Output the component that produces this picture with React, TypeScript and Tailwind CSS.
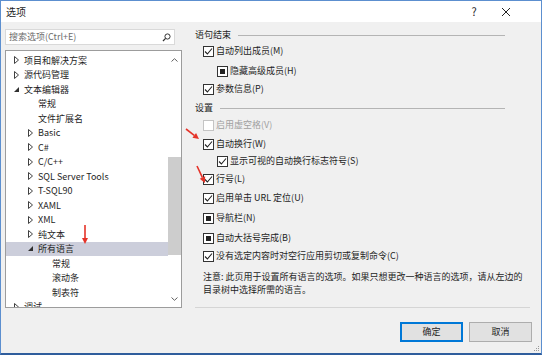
import React from "react"

type Node = { d: number; t: string; s?: "closed" | "open"; sel?: boolean }

const tree: Node[] = [
  { d: 0, t: "项目和解决方案", s: "closed" },
  { d: 0, t: "源代码管理", s: "closed" },
  { d: 0, t: "文本编辑器", s: "open" },
  { d: 1, t: "常规" },
  { d: 1, t: "文件扩展名" },
  { d: 1, t: "Basic", s: "closed" },
  { d: 1, t: "C#", s: "closed" },
  { d: 1, t: "C/C++", s: "closed" },
  { d: 1, t: "SQL Server Tools", s: "closed" },
  { d: 1, t: "T-SQL90", s: "closed" },
  { d: 1, t: "XAML", s: "closed" },
  { d: 1, t: "XML", s: "closed" },
  { d: 1, t: "纯文本", s: "closed" },
  { d: 1, t: "所有语言", s: "open", sel: true },
  { d: 2, t: "常规" },
  { d: 2, t: "滚动条" },
  { d: 2, t: "制表符" },
  { d: 0, t: "调试", s: "closed" },
]

const indent = ["pl-[8px]", "pl-[22px]", "pl-[36px]"]

type Row =
  | { kind: "head"; text: string; mt: string }
  | { kind: "check"; text: string; state: "on" | "mixed" | "off"; sub?: boolean; mt: string }

const rows: Row[] = [
  { kind: "head", text: "语句结束", mt: "mt-[6px]" },
  { kind: "check", text: "自动列出成员(M)", state: "on", mt: "mt-[2px]" },
  { kind: "check", text: "隐藏高级成员(H)", state: "mixed", sub: true, mt: "mt-[6px]" },
  { kind: "check", text: "参数信息(P)", state: "on", mt: "mt-[4px]" },
  { kind: "head", text: "设置", mt: "mt-[5px]" },
  { kind: "check", text: "启用虚空格(V)", state: "off", mt: "mt-[3px]" },
  { kind: "check", text: "自动换行(W)", state: "on", mt: "mt-[5px]" },
  { kind: "check", text: "显示可视的自动换行标志符号(S)", state: "on", sub: true, mt: "mt-[3px]" },
  { kind: "check", text: "行号(L)", state: "on", mt: "mt-[4px]" },
  { kind: "check", text: "启用单击 URL 定位(U)", state: "on", mt: "mt-[5px]" },
  { kind: "check", text: "导航栏(N)", state: "mixed", mt: "mt-[6px]" },
  { kind: "check", text: "自动大括号完成(B)", state: "mixed", mt: "mt-[6px]" },
  { kind: "check", text: "没有选定内容时对空行应用剪切或复制命令(C)", state: "on", mt: "mt-[4px]" },
]

function Toggle({ s }: { s?: "closed" | "open" }) {
  if (s === "closed")
    return (
      <svg width="5" height="8" viewBox="0 0 5 8">
        <polygon points="0.5,0.5 4.5,4 0.5,7.5" fill="#fff" stroke="#404040" strokeWidth="1" />
      </svg>
    )
  if (s === "open")
    return (
      <svg width="5" height="5" viewBox="0 0 5 5">
        <polygon points="5,0 5,5 0,5" fill="#303030" />
      </svg>
    )
  return null
}

function Box({ state }: { state: "on" | "mixed" | "off" }) {
  const off = state === "off"
  return (
    <span
      className={`w-[11px] h-[11px] shrink-0 border bg-white flex items-center justify-center ${
        off ? "border-[#c4c4c4]" : "border-[#333]"
      }`}
    >
      {state === "on" && (
        <svg width="9" height="9" viewBox="0 0 9 9">
          <polyline points="1,4.5 3.4,7 8,1.5" fill="none" stroke="#222" strokeWidth="1.1" />
        </svg>
      )}
      {state === "mixed" && <span className="w-[5px] h-[5px] bg-[#222]" />}
    </span>
  )
}

function Arrow({ x1, y1, x2, y2 }: { x1: number; y1: number; x2: number; y2: number }) {
  const dx = x2 - x1
  const dy = y2 - y1
  const len = Math.hypot(dx, dy)
  const ux = dx / len
  const uy = dy / len
  const bx = x2 - ux * 6
  const by = y2 - uy * 6
  const px = -uy * 3
  const py = ux * 3
  return (
    <g>
      <line x1={x1} y1={y1} x2={bx} y2={by} stroke="#e53329" strokeWidth="1.6" />
      <polygon points={`${x2},${y2} ${bx + px},${by + py} ${bx - px},${by - py}`} fill="#e53329" />
    </g>
  )
}

export default function App() {
  return (
    <div className="relative w-[542px] h-[355px] flex flex-col bg-[#f0f0f0] border border-[#5c8fcf] border-b-2 border-b-[#2f5d9c] font-['Noto_Sans_CJK_SC',sans-serif] text-[9px] text-[#1e1e1e] overflow-hidden">
      {/* title bar */}
      <div className="h-[21px] shrink-0 bg-white flex items-center pl-[5px]">
        <span className="text-[10px]">选项</span>
        <div className="flex-1" />
        <span className="w-[32px] text-center text-[11px]">?</span>
        <span className="w-[32px] flex justify-center mr-[19px]">
          <svg width="10" height="10" viewBox="0 0 10 10">
            <path d="M1 1L9 9M9 1L1 9" stroke="#222" strokeWidth="1" />
          </svg>
        </span>
      </div>

      <div className="flex flex-1">
        {/* left side: search + tree */}
        <div className="w-[181px] shrink-0 pl-[4px] flex flex-col">
          <div className="mt-[7px] w-[170px] h-[16px] bg-white border border-[#d9d9d9] flex items-center pl-[3px] pr-[3px]">
            <span className="flex-1 text-[#6d6d6d]">搜索选项(Ctrl+E)</span>
            <svg width="9" height="9" viewBox="0 0 9 9">
              <circle cx="5.5" cy="3.5" r="2.6" fill="none" stroke="#333" strokeWidth="1" />
              <path d="M3.6 5.4L1 8" stroke="#333" strokeWidth="1.3" />
            </svg>
          </div>

          <div className="mt-[5px] w-[177px] h-[258px] bg-white border border-[#9c9c9c] flex overflow-hidden">
            <div className="flex-1 pt-[2px] flex flex-col">
              {tree.map((n, i) => (
                <div
                  key={i}
                  className={`h-[14.5px] shrink-0 flex items-center ${indent[n.d]} ${n.sel ? "bg-[#cccedb]" : ""}`}
                >
                  <span className="w-[10px] shrink-0 flex items-center">
                    <Toggle s={n.s} />
                  </span>
                  <span className="whitespace-nowrap">{n.t}</span>
                </div>
              ))}
            </div>
            <div className="w-[13px] shrink-0 flex flex-col">
              <div className="h-[17px] flex items-center justify-center">
                <svg width="7" height="4" viewBox="0 0 7 4">
                  <polyline points="0.5,3.5 3.5,0.7 6.5,3.5" fill="none" stroke="#606060" strokeWidth="1" />
                </svg>
              </div>
              <div className="flex-1 flex flex-col">
                <div className="mt-[89px] h-[98px] bg-[#cdcdcd]" />
              </div>
              <div className="h-[17px] flex items-center justify-center">
                <svg width="7" height="4" viewBox="0 0 7 4">
                  <polyline points="0.5,0.5 3.5,3.3 6.5,0.5" fill="none" stroke="#606060" strokeWidth="1" />
                </svg>
              </div>
            </div>
          </div>
        </div>

        {/* right side: options */}
        <div className="flex-1 pl-[13px] pr-[11px] flex flex-col">
          {rows.map((r, i) =>
            r.kind === "head" ? (
              <div key={i} className={`h-[14px] flex items-center gap-[7px] mr-[25px] ${r.mt}`}>
                <span>{r.text}</span>
                <span className="flex-1 border-t border-[#b4b4b4]" />
              </div>
            ) : (
              <div
                key={i}
                className={`h-[14px] flex items-center gap-[2px] ${r.sub ? "pl-[22px]" : "pl-[8px]"} ${r.mt} ${
                  r.state === "off" ? "text-[#a0a0a0]" : ""
                }`}
              >
                <Box state={r.state} />
                <span className="whitespace-nowrap">{r.text}</span>
              </div>
            )
          )}

          <div className="mt-[7px] pl-[8px] leading-[13px]">
            <div>注意: 此页用于设置所有语言的选项。如果只想更改一种语言的选项，请从左边的</div>
            <div>目录树中选择所需的语言。</div>
          </div>

          <div className="mt-[11px] border-t border-[#d5d5d5]" />

          <div className="mt-[14px] flex justify-end gap-[6px] mr-[-2px]">
            <button className="w-[63px] h-[20px] bg-[#e1e1e1] border border-[#0078d7] outline outline-1 outline-[#0078d7] -outline-offset-2 text-[9px]">
              确定
            </button>
            <button className="w-[63px] h-[20px] bg-[#e1e1e1] border border-[#adadad] text-[9px]">取消</button>
          </div>
        </div>
      </div>

      {/* resize grip */}
      <div className="absolute right-[2px] bottom-[2px] grid grid-cols-3 gap-[1px]">
        <span />
        <span />
        <span className="w-[1px] h-[1px] bg-[#999]" />
        <span />
        <span className="w-[1px] h-[1px] bg-[#999]" />
        <span className="w-[1px] h-[1px] bg-[#999]" />
        <span className="w-[1px] h-[1px] bg-[#999]" />
        <span className="w-[1px] h-[1px] bg-[#999]" />
        <span className="w-[1px] h-[1px] bg-[#999]" />
      </div>

      {/* red annotation arrows */}
      <svg className="absolute left-[-1px] top-[-1px] pointer-events-none" width="542" height="355">
        <Arrow x1={186} y1={129} x2={199} y2={139} />
        <Arrow x1={197} y1={166} x2={205} y2={183} />
        <Arrow x1={85} y1={225} x2={85} y2={244} />
      </svg>
    </div>
  )
}
